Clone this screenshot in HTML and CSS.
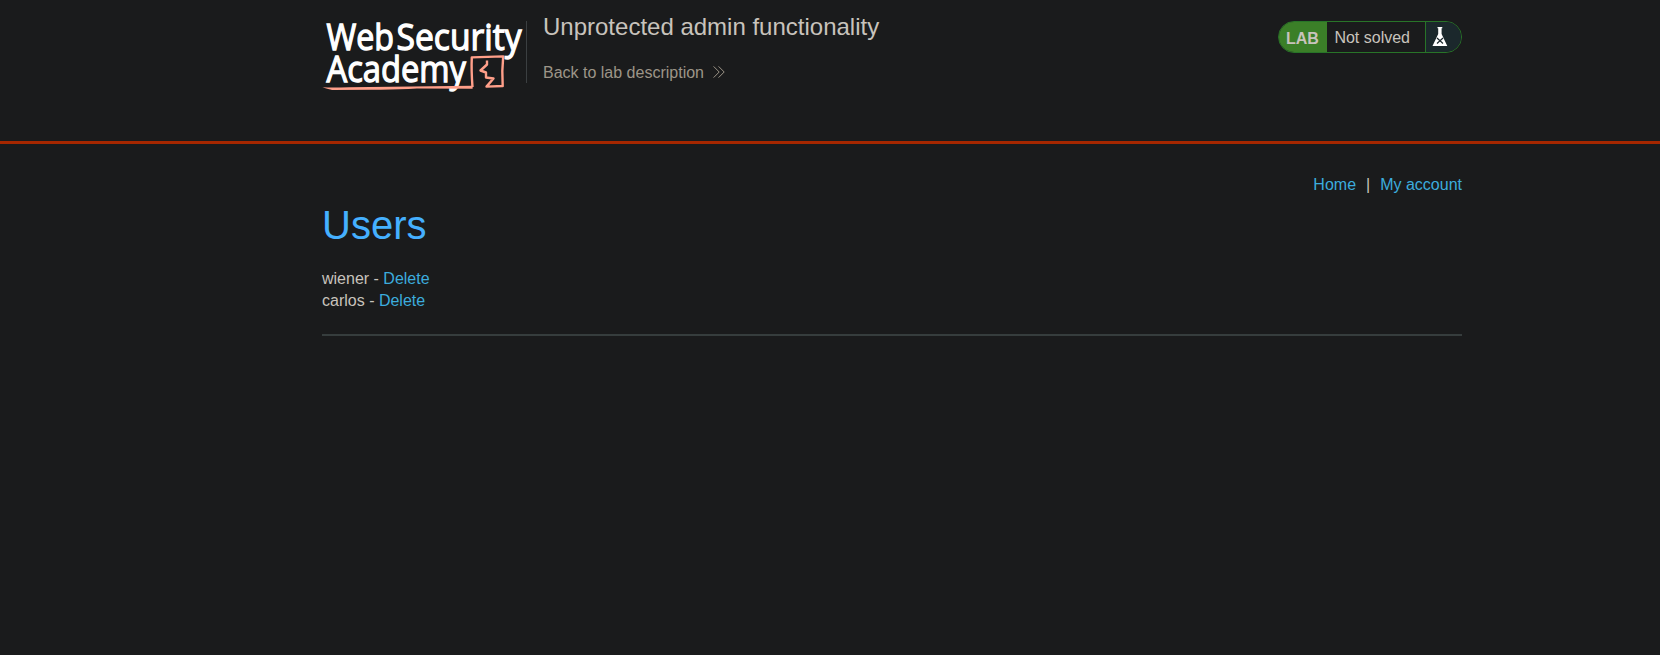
FILE: index.html
```html
<!DOCTYPE html>
<html lang="en">
<head>
<meta charset="utf-8">
<title>Unprotected admin functionality</title>
<link rel="stylesheet" href="styles.css">
</head>
<body>
<header class="lab-header">
  <div class="container header-row">
    <svg class="logo" width="204" height="72" viewBox="0 0 204 72" role="img" aria-label="Web Security Academy">
      <g class="logo-text">
        <text x="4.5" y="28.5" textLength="67.5" lengthAdjust="spacingAndGlyphs">Web</text>
        <text x="74.5" y="28.5" textLength="125" lengthAdjust="spacingAndGlyphs">Security</text>
        <text x="4.5" y="60.5" textLength="139.5" lengthAdjust="spacingAndGlyphs">Academy</text>
      </g>
      <path class="logo-fill" d="M0.5 66.3Q12 66.7 27 66.2L150.6 64.7V67.8L95 67.6Q75 69 50 68.7L10 69Q7 68.5 0.5 66.3Z"/>
      <path class="logo-line" d="M150.5 66.2Q149.2 49 149.8 36.4L181.2 35.4Q179.7 50 180.7 65L164.5 65.6L171.5 57.5L164 56.5V51.5L158.5 49.5L165 43.5V39.5"/>
    </svg>
    <div class="title">
      <h2>Unprotected admin functionality</h2>
      <a class="back" href="#">Back to lab description
        <svg width="12" height="12" viewBox="0 0 12 12"><path d="M.6.4 6.2 6 .6 11.6M5.6.4 11.2 6 5.6 11.6"/></svg>
      </a>
    </div>
    <div class="status">
      <span class="lab">LAB</span>
      <span class="state">Not solved</span>
      <span class="flask">
        <svg width="16" height="20" viewBox="0 0 16 20"><path fill="#fff" d="M5.5 0h4.8v1.2H9.6V7L15.3 19H.5L6.2 7V1.2h-.7z"/><path fill="none" stroke="#1b282c" stroke-width="1.2" d="m5 11 6 5.5M11 11l-6 5.5"/></svg>
      </span>
    </div>
  </div>
</header>
<main class="container">
  <nav class="links"><a href="#">Home</a><span>|</span><a href="#">My account</a></nav>
  <h1>Users</h1>
  <div class="user">wiener - <a href="#">Delete</a></div>
  <div class="user">carlos - <a href="#">Delete</a></div>
  <hr>
</main>
</body>
</html>
```
FILE: styles.css
```css
* { box-sizing: border-box; }
body {
  margin: 0;
  background: #1a1b1c;
  color: #c8c3bc;
  font: 16px/22px "Liberation Sans", Arial, sans-serif;
}
a { color: #3cacdd; text-decoration: none; }
.container { width: 1140px; margin-left: 322px; }
.lab-header { height: 144px; border-bottom: 3px solid #a52700; }
.header-row { display: flex; align-items: flex-start; padding-top: 21px; }
.logo { flex: none; overflow: visible; }
.logo-text { fill: #fff; stroke: #fff; stroke-width: 1.3; font: 400 37px "Open Sans", sans-serif; }
.logo-fill { fill: #ff9f89; }
.logo-line { fill: none; stroke: #ff9f89; stroke-width: 2.4; stroke-linejoin: round; }
.title { height: 62px; padding-left: 16px; border-left: 1px solid #3b3f41; }
.title h2 { margin: -8px 0 0; font-size: 24px; font-weight: 400; line-height: 28px; }
.back { display: flex; align-items: center; gap: 9px; margin-top: 21px; color: #9d9588; }
.back svg { fill: none; stroke: #9d9588; stroke-width: 1; margin-top: -2px; }
.status {
  display: flex;
  width: 184px;
  height: 32px;
  margin-left: auto;
  border: 1px solid #287428;
  border-radius: 16px;
  overflow: hidden;
  line-height: 30px;
}
.lab { width: 48px; padding: 2px 0 0 7px; background: #3b7f28; font-weight: 700; }
.state { flex: 1; padding: 1px 0 0 7.4px; }
.flask { width: 36px; padding: 5px 0 0 6px; border-left: 1px solid #287428; background: #1b282c; }
.flask svg { display: block; }
.links { display: flex; justify-content: flex-end; gap: 10px; padding-top: 30px; }
h1 { margin: 6px 0 20px; color: #45b0ff; font-size: 40px; font-weight: 400; line-height: 46px; }
hr { height: 2px; margin: 22px 0 0; border: 0; background: #363d3d; }
```
